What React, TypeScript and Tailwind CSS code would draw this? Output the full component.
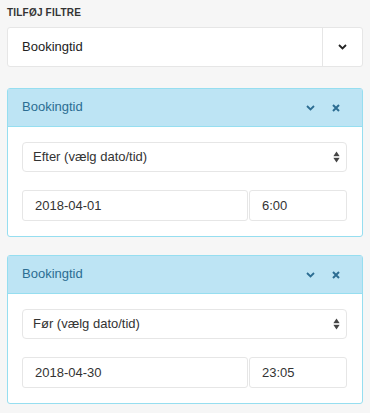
import React from 'react'

function ChevronDown({ className = '' }: { className?: string }) {
  return (
    <svg width="9" height="6" viewBox="0 0 9 6" className={className}>
      <path d="M1 1l3.5 3.5L8 1" fill="none" stroke="currentColor" strokeWidth="1.8" />
    </svg>
  )
}

function CloseIcon() {
  return (
    <svg width="8" height="8" viewBox="0 0 8 8">
      <path d="M1 1l6 6M7 1L1 7" fill="none" stroke="currentColor" strokeWidth="2" />
    </svg>
  )
}

function SortArrows() {
  return (
    <svg width="7" height="12" viewBox="0 0 7 12">
      <path d="M3.5 0.5L6.5 5H0.5z" fill="#444" />
      <path d="M3.5 11.5L6.5 7H0.5z" fill="#444" />
      <path d="M0.5 6h6" stroke="#888" strokeWidth="0.6" />
    </svg>
  )
}

function FilterPanel({ mode, date, time }: { mode: string; date: string; time: string }) {
  return (
    <div className="rounded-[3px] border border-[#96def0] bg-white">
      <div className="flex h-[38px] items-center border-b border-[#96def0] bg-[#bde4f4] pl-[14px] pr-[22px] text-[#2c6d92]">
        <span className="flex-1 pb-[2px]">Bookingtid</span>
        <div className="flex items-center gap-[17px]">
          <ChevronDown />
          <CloseIcon />
        </div>
      </div>
      <div className="pl-[14px] pr-[15px] pt-[15px] pb-[15px]">
        <div className="flex h-[30px] items-center rounded-[4px] border border-[#e6e6e6] pl-[10px] pr-[6px] text-[#333]">
          <span className="flex-1 pb-[1px]">{mode}</span>
          <SortArrows />
        </div>
        <div className="mt-[18px] flex gap-[1px]">
          <div className="flex h-[31px] w-[226px] items-center rounded-[3px] border border-[#e6e6e6] pl-[12px] text-[#333]">
            {date}
          </div>
          <div className="flex h-[31px] flex-1 items-center rounded-[3px] border border-[#e6e6e6] pl-[12px] text-[#333]">
            {time}
          </div>
        </div>
      </div>
    </div>
  )
}

export default function App() {
  return (
    <div className="min-h-[413px] bg-[#f6f6f6] px-[7px] pt-[7px] text-[13px] font-['Liberation_Sans',Arial,sans-serif]">
      <div className="text-[10px] font-bold tracking-[0.2px] text-[#333] leading-[11px]">TILFØJ FILTRE</div>
      <div className="mt-[9px] flex h-[40px] rounded-[3px] border border-[#e6e6e6] bg-white">
        <div className="flex flex-1 items-center pl-[14px] text-[#222]">Bookingtid</div>
        <div className="flex w-[40px] items-center justify-center border-l border-[#e6e6e6] text-[#222]">
          <ChevronDown />
        </div>
      </div>
      <div className="mt-[21px] flex flex-col gap-[18px]">
        <FilterPanel mode="Efter (vælg dato/tid)" date="2018-04-01" time="6:00" />
        <FilterPanel mode="Før (vælg dato/tid)" date="2018-04-30" time="23:05" />
      </div>
    </div>
  )
}
